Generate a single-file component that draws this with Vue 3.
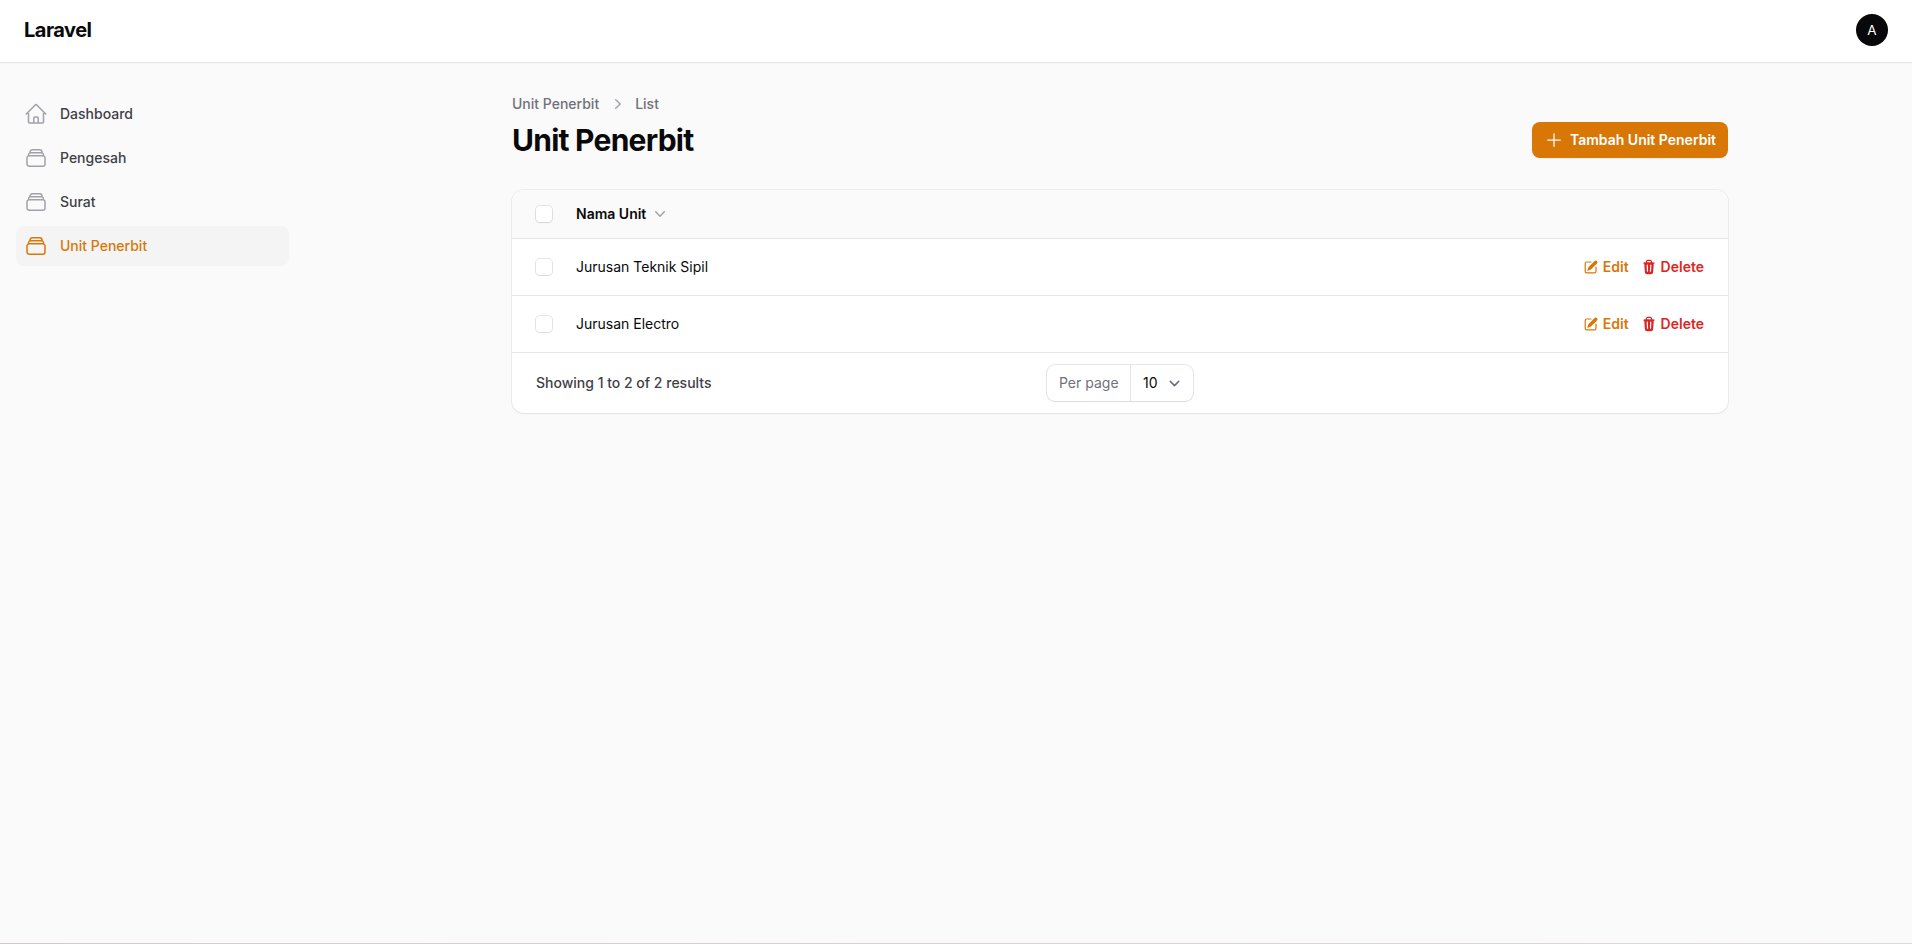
<script setup>
const stack = 'M6 6.878V6a2.25 2.25 0 0 1 2.25-2.25h7.5A2.25 2.25 0 0 1 18 6v.878m-12 0c.235-.083.487-.128.75-.128h10.5c.263 0 .515.045.75.128m-12 0A2.25 2.25 0 0 0 4.5 9v.878m13.5-3A2.25 2.25 0 0 1 19.5 9v.878m0 0a2.246 2.246 0 0 0-.75-.128H5.25c-.263 0-.515.045-.75.128m15 0A2.25 2.25 0 0 1 21 12v6a2.25 2.25 0 0 1-2.25 2.25H5.25A2.25 2.25 0 0 1 3 18v-6c0-.98.626-1.813 1.5-2.122'
const home = 'm2.25 12 8.954-8.955c.44-.439 1.152-.439 1.591 0L21.75 12M4.5 9.75v10.125c0 .621.504 1.125 1.125 1.125H9.75v-4.875c0-.621.504-1.125 1.125-1.125h2.25c.621 0 1.125.504 1.125 1.125V21h4.125c.621 0 1.125-.504 1.125-1.125V9.75M8.25 21h8.25'
const nav = [
  { label: 'Dashboard', icon: home },
  { label: 'Pengesah', icon: stack },
  { label: 'Surat', icon: stack },
  { label: 'Unit Penerbit', icon: stack, active: true },
]
const units = ['Jurusan Teknik Sipil', 'Jurusan Electro']
</script>

<template>
  <div class="page">
    <header class="topbar">
      <div class="brand">Laravel</div>
      <div class="avatar">A</div>
    </header>
    <div class="body">
      <aside class="sidebar">
        <a v-for="item in nav" :key="item.label" class="nav-item" :class="{ active: item.active }">
          <svg viewBox="0 0 24 24" fill="none" stroke="currentColor" stroke-width="1.5" stroke-linecap="round" stroke-linejoin="round"><path :d="item.icon" /></svg>
          <span>{{ item.label }}</span>
        </a>
      </aside>
      <main class="main">
        <nav class="crumbs">
          <span>Unit Penerbit</span>
          <svg viewBox="0 0 20 20" fill="currentColor"><path fill-rule="evenodd" d="M7.21 14.77a.75.75 0 0 1 .02-1.06L11.168 10 7.23 6.29a.75.75 0 1 1 1.04-1.08l4.5 4.25a.75.75 0 0 1 0 1.08l-4.5 4.25a.75.75 0 0 1-1.06-.02Z" clip-rule="evenodd" /></svg>
          <span>List</span>
        </nav>
        <div class="heading">
          <h1>Unit Penerbit</h1>
          <button class="create">
            <svg viewBox="0 0 24 24" fill="none" stroke="currentColor" stroke-width="1.5" stroke-linecap="round"><path d="M12 4.5v15m7.5-7.5h-15" /></svg>
            <span>Tambah Unit Penerbit</span>
          </button>
        </div>
        <section class="card">
          <div class="row head">
            <span class="check"></span>
            <span class="name">Nama Unit</span>
            <svg class="sort" viewBox="0 0 20 20" fill="currentColor"><path fill-rule="evenodd" d="M5.23 7.21a.75.75 0 0 1 1.06.02L10 11.168l3.71-3.938a.75.75 0 1 1 1.08 1.04l-4.25 4.5a.75.75 0 0 1-1.08 0l-4.25-4.5a.75.75 0 0 1 .02-1.06Z" clip-rule="evenodd" /></svg>
          </div>
          <div v-for="unit in units" :key="unit" class="row">
            <span class="check"></span>
            <span class="name">{{ unit }}</span>
            <div class="actions">
              <a class="action edit">
                <svg viewBox="0 0 20 20" fill="currentColor"><path d="m5.433 13.917 1.262-3.155A4 4 0 0 1 7.58 9.42l6.92-6.918a2.121 2.121 0 0 1 3 3l-6.92 6.918c-.383.383-.84.685-1.343.886l-3.154 1.262a.5.5 0 0 1-.65-.65Z" /><path d="M3.5 5.75c0-.69.56-1.25 1.25-1.25H10A.75.75 0 0 0 10 3H4.75A2.75 2.75 0 0 0 2 5.75v9.5A2.75 2.75 0 0 0 4.75 18h9.5A2.75 2.75 0 0 0 17 15.25V10a.75.75 0 0 0-1.5 0v5.25c0 .69-.56 1.25-1.25 1.25h-9.5c-.69 0-1.25-.56-1.25-1.25v-9.5Z" /></svg>
                <span>Edit</span>
              </a>
              <a class="action delete">
                <svg viewBox="0 0 20 20" fill="currentColor"><path fill-rule="evenodd" d="M8.75 1A2.75 2.75 0 0 0 6 3.75v.443c-.795.077-1.584.176-2.365.298a.75.75 0 1 0 .23 1.482l.149-.022.841 10.518A2.75 2.75 0 0 0 7.596 19h4.807a2.75 2.75 0 0 0 2.742-2.53l.841-10.52.149.023a.75.75 0 0 0 .23-1.482A41.03 41.03 0 0 0 14 4.193V3.75A2.75 2.75 0 0 0 11.25 1h-2.5ZM10 4c.84 0 1.673.025 2.5.075V3.75c0-.69-.56-1.25-1.25-1.25h-2.5c-.69 0-1.25.56-1.25 1.25v.325C8.327 4.025 9.16 4 10 4ZM8.58 7.72a.75.75 0 0 0-1.5.06l.3 7.5a.75.75 0 1 0 1.5-.06l-.3-7.5Zm4.34.06a.75.75 0 1 0-1.5-.06l-.3 7.5a.75.75 0 1 0 1.5.06l.3-7.5Z" clip-rule="evenodd" /></svg>
                <span>Delete</span>
              </a>
            </div>
          </div>
          <footer class="foot">
            <span class="summary">Showing 1 to 2 of 2 results</span>
            <div class="per-page">
              <span class="prefix">Per page</span>
              <span class="select">10
                <svg viewBox="0 0 20 20" fill="none" stroke="#6b7280" stroke-width="1.5" stroke-linecap="round" stroke-linejoin="round"><path d="m6 8 4 4 4-4" /></svg>
              </span>
            </div>
          </footer>
        </section>
      </main>
    </div>
    <div class="bottom-line"></div>
  </div>
</template>

<style>
body { margin: 0; background: #fafafa; overflow: hidden; }
</style>

<style scoped>
* { box-sizing: border-box; }
svg { display: block; flex: none; }
.page {
  display: flex;
  flex-direction: column;
  height: 100vh;
  background: #fafafa;
  color: #09090b;
  font: 400 14px/20px Inter, sans-serif;
}
.topbar {
  flex: none;
  display: flex;
  align-items: center;
  justify-content: space-between;
  height: 62px;
  padding: 0 24px 2px;
  background: #fff;
  box-shadow: 0 0 0 1px rgba(9, 9, 11, .05), 0 1px 2px rgba(0, 0, 0, .05);
}
.brand { font-size: 20px; line-height: 20px; font-weight: 700; letter-spacing: -.5px; }
.avatar {
  width: 32px;
  height: 32px;
  border-radius: 50%;
  background: #09090b;
  color: #fff;
  font-size: 13.5px;
  line-height: 32px;
  text-align: center;
}
.body { flex: 1; display: flex; min-height: 0; }
.sidebar {
  flex: none;
  width: 320px;
  padding: 32px 31px 0 16px;
  display: flex;
  flex-direction: column;
  gap: 4px;
}
.nav-item {
  display: flex;
  align-items: center;
  gap: 12px;
  height: 40px;
  padding: 0 8px;
  border-radius: 8px;
  color: #3f3f46;
  font-weight: 500;
}
.nav-item svg { width: 24px; height: 24px; color: #a1a1aa; }
.nav-item.active { background: #f4f4f5; color: #d97706; }
.nav-item.active svg { color: #d97706; }
.main { width: 1216px; margin-left: 192px; padding-top: 32px; }
.crumbs {
  display: flex;
  align-items: center;
  gap: 8px;
  color: #71717a;
  font-weight: 500;
}
.crumbs svg { width: 20px; height: 20px; margin: 0 -.6px 0 .6px; color: #a1a1aa; }
.heading {
  display: flex;
  align-items: center;
  justify-content: space-between;
  margin: 8px 0 32px;
}
h1 { margin: 0; font-size: 30px; line-height: 36px; font-weight: 700; letter-spacing: -.75px; }
.create {
  display: flex;
  align-items: center;
  gap: 6px;
  height: 36px;
  padding: 0 12px;
  border: 0;
  border-radius: 8px;
  background: #d97706;
  color: #fff;
  font: 600 14px/20px Inter, sans-serif;
  box-shadow: 0 1px 2px rgba(0, 0, 0, .05);
}
.create svg { width: 20px; height: 20px; }
.card {
  border-radius: 12px;
  background: #fff;
  box-shadow: 0 0 0 1px rgba(9, 9, 11, .05), 0 1px 2px rgba(0, 0, 0, .05);
}
.row {
  display: flex;
  align-items: center;
  height: 57px;
  padding: 0 24px;
  border-bottom: 1px solid #e4e4e7;
}
.head { height: 49px; background: #fafafa; border-radius: 12px 12px 0 0; }
.check {
  width: 16px;
  height: 16px;
  margin-right: 24px;
  border-radius: 4px;
  background: #fff;
  box-shadow: 0 0 0 1px rgba(9, 9, 11, .1), 0 1px 2px rgba(0, 0, 0, .05);
}
.head .name { font-weight: 600; }
.sort { width: 20px; height: 20px; margin-left: 4px; color: #a1a1aa; }
.actions { display: flex; gap: 12px; margin-left: auto; }
.action { display: flex; align-items: center; gap: 4px; font-weight: 600; }
.action svg { width: 16px; height: 16px; }
.edit { color: #d97706; }
.delete { color: #dc2626; }
.foot {
  display: grid;
  grid-template-columns: 1fr auto 1fr;
  align-items: center;
  height: 60px;
  padding: 0 24px;
}
.summary { color: #3f3f46; font-weight: 500; }
.per-page {
  display: flex;
  width: 146px;
  height: 36px;
  border-radius: 8px;
  background: #fff;
  line-height: 36px;
  box-shadow: 0 0 0 1px rgba(9, 9, 11, .1), 0 1px 2px rgba(0, 0, 0, .05);
}
.prefix { width: 84px; padding-left: 12px; border-right: 1px solid #e4e4e7; color: #71717a; white-space: nowrap; }
.select { flex: 1; display: flex; align-items: center; justify-content: space-between; padding: 0 8px 0 12px; }
.select svg { width: 21px; height: 21px; }
.bottom-line { flex: none; height: 1px; background: linear-gradient(90deg, #d3cacd, #e0d9dc); }
</style>
